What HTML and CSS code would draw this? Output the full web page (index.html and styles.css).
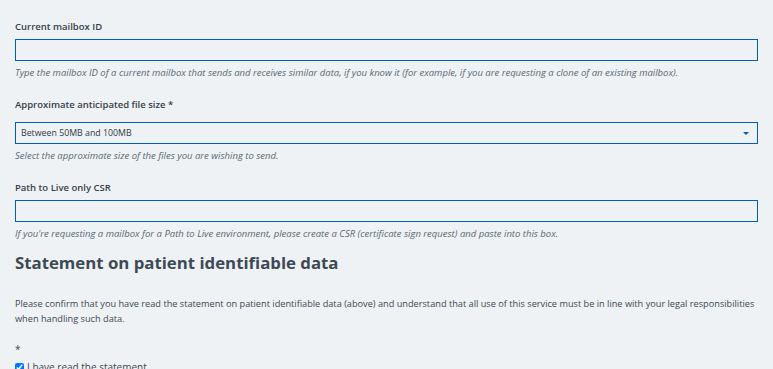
FILE: index.html
```html
<html>
<head>
   <meta charset="utf-8">
   <link rel="stylesheet" href="styles.css">
</head>
<body>
   <div class="page">
      <div class="field">
         <label class="field-label" for="mailbox">Current mailbox ID</label>
         <input class="text-input" id="mailbox" type="text">
         <div class="hint">Type the mailbox ID of a current mailbox that sends and receives similar data, if you know it (for example, if you are requesting a clone of an existing mailbox).</div>
      </div>

      <div class="field">
         <label class="field-label" for="size">Approximate anticipated file size *</label>
         <div class="select-box" id="size">
            <span>Between 50MB and 100MB</span>
            <span class="select-arrow"></span>
         </div>
         <div class="hint">Select the approximate size of the files you are wishing to send.</div>
      </div>

      <div class="field">
         <label class="field-label" for="csr">Path to Live only CSR</label>
         <input class="text-input" id="csr" type="text">
         <div class="hint">If you're requesting a mailbox for a Path to Live environment, please create a CSR (certificate sign request) and paste into this box.</div>
      </div>

      <h2 class="section-title">Statement on patient identifiable data</h2>

      <p class="statement">Please confirm that you have read the statement on patient identifiable data (above) and understand that all use of this service must be in line with your legal responsibilities when handling such data.</p>

      <div class="required">*</div>
      <label class="check-row"><input type="checkbox" checked> I have read the statement</label>
   </div>
</body>
</html>
```

FILE: styles.css
```css
body {
   margin: 0;
   background-color: #eff2f4;
   font-family: "Open Sans", "Noto Sans", sans-serif;
   color: #3d4853;
   overflow: hidden;
}
.page {
   width: 743px;
   padding: 20px 15px 0 15px;
}
.field {
   margin-bottom: 19px;
}
.field-label {
   display: block;
   font-size: 9.5px;
   font-weight: 600;
   line-height: 14px;
   margin-bottom: 5px;
   color: #36414b;
}
.text-input {
   display: block;
   box-sizing: border-box;
   width: 100%;
   height: 22px;
   margin: 0;
   border: 1.5px solid #005eb8;
   background-color: #eff2f4;
   outline: none;
}
.select-box {
   box-sizing: border-box;
   display: flex;
   align-items: center;
   justify-content: space-between;
   height: 22px;
   margin-top: 10px;
   padding: 0 8px 0 5px;
   border: 1.5px solid #005eb8;
   font-size: 8.8px;
   color: #2f3a44;
}
.select-arrow {
   width: 0;
   height: 0;
   border-left: 3px solid transparent;
   border-right: 3px solid transparent;
   border-top: 3px solid #005eb8;
}
.hint {
   margin-top: 6px;
   font-size: 9.5px;
   font-style: italic;
   line-height: 12px;
   color: #5b6873;
}
.section-title {
   margin: -8px 0 0 0;
   font-size: 16.8px;
   font-weight: 700;
   line-height: 24px;
   color: #3d4a56;
}
.statement {
   margin: 21px 0 0 0;
   font-size: 9.2px;
   line-height: 15px;
}
.required {
   margin-top: 17px;
   font-size: 10px;
   line-height: 12px;
}
.check-row {
   display: flex;
   align-items: center;
   gap: 3px;
   margin-top: 5px;
   font-size: 10px;
}
.check-row input {
   margin: 0;
   width: 9px;
   height: 9px;
}
```
